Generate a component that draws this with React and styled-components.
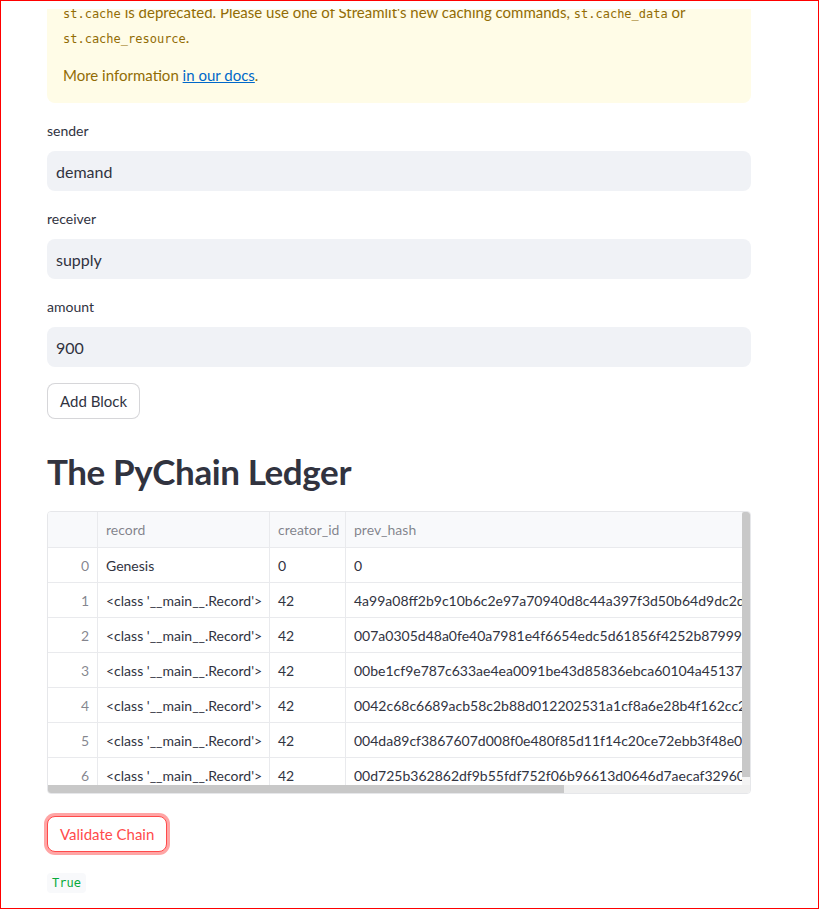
import React from "react";
import styled, { createGlobalStyle } from "styled-components";

const GlobalStyle = createGlobalStyle`
  html, body { margin: 0; padding: 0; background: #ffffff; }
  * { box-sizing: border-box; }
`;

const SANS = `"Lato", "Noto Sans", sans-serif`;
const MONO = `"DejaVu Sans Mono", "Liberation Mono", monospace`;

const Frame = styled.div`
  width: 819px;
  height: 909px;
  border: 1px solid #ff0000;
  overflow: hidden;
  background: #ffffff;
  font-family: ${SANS};
  color: #31333f;
`;

const TopBar = styled.div`
  height: 8px;
  background: #ffffff;
`;

const Main = styled.main`
  width: 704px;
  margin-left: 46px;
  display: flex;
  flex-direction: column;
  gap: 16px;
`;

const Alert = styled.div`
  background: #fffce7;
  color: #926c05;
  border-radius: 0 0 8px 8px;
  padding: 0 16px 15px;
  overflow: hidden;
  font-size: 15px;
  line-height: 25px;
`;

const AlertBody = styled.div`
  margin-top: -9px;
  display: flex;
  flex-direction: column;
  gap: 13px;
`;

const AlertPara = styled.p`
  margin: 0;
  white-space: nowrap;
  line-height: 25px;
`;

const InlineCode = styled.code`
  font-family: ${MONO};
  font-size: 12px;
  line-height: 1;
  color: inherit;
`;

const DocLink = styled.a`
  color: #0068c9;
  text-decoration: underline;
`;

const Field = styled.div`
  display: flex;
  flex-direction: column;
`;

const Label = styled.label`
  font-size: 14px;
  line-height: 24px;
  height: 24px;
  margin-bottom: 8px;
  color: #31333f;
`;

const Input = styled.div`
  height: 40px;
  background: #f0f2f6;
  border-radius: 8px;
  display: flex;
  align-items: center;
  padding: 0 9px;
  font-size: 16px;
  color: #31333f;
`;

const ButtonRow = styled.div`
  display: flex;
  margin-top: ${(p) => p.$offset || 0}px;
`;

const Button = styled.button`
  font-family: ${SANS};
  font-size: 15px;
  height: 36px;
  padding: 0 12px;
  border-radius: 8px;
  background: #ffffff;
  cursor: pointer;
  border: 1px solid ${(p) => (p.$focused ? "#ff4b4b" : "rgba(49, 51, 63, 0.2)")};
  color: ${(p) => (p.$focused ? "#ff4b4b" : "#31333f")};
  box-shadow: ${(p) => (p.$focused ? "0 0 0 3px rgba(255, 75, 75, 0.5)" : "none")};
`;

const Heading = styled.h1`
  margin: 0;
  padding: 15px 0 3px;
  font-family: ${SANS};
  font-weight: 700;
  font-size: 35px;
  line-height: 42px;
  letter-spacing: -0.4px;
  color: #31333f;
`;

const TableBox = styled.div`
  height: 283px;
  border: 1px solid #e6e7ea;
  border-radius: 4px;
  overflow: hidden;
  display: grid;
  grid-template-columns: 1fr 8px;
  grid-template-rows: 1fr 8px;
`;

const Viewport = styled.div`
  overflow: hidden;
`;

const Grid = styled.div`
  display: grid;
  grid-template-columns: 50px 172px 76px 520px;
  width: max-content;
`;

const Cell = styled.div`
  height: ${(p) => (p.$head ? "36px" : "35px")};
  display: flex;
  align-items: center;
  justify-content: ${(p) => (p.$index ? "flex-end" : "flex-start")};
  padding: 0 8px;
  font-size: 14px;
  white-space: nowrap;
  overflow: hidden;
  background: ${(p) => (p.$head ? "#f8f9fb" : "#ffffff")};
  color: ${(p) => (p.$head || p.$index ? "rgba(49, 51, 63, 0.6)" : "#31333f")};
  border-right: 1px solid #e9eaed;
  border-bottom: 1px solid #e9eaed;
`;

const VTrack = styled.div`
  background: #f4f4f4;
  display: flex;
  flex-direction: column;
`;

const VThumb = styled.div`
  height: 265px;
  background: #c8c8c8;
  border-radius: 2px 2px 0 0;
`;

const HTrack = styled.div`
  background: #efefef;
  display: flex;
`;

const HThumb = styled.div`
  background: #c8c8c8;
`;

const Corner = styled.div`
  background: #efefef;
`;

const ResultLine = styled.div`
  line-height: 25px;
  font-size: 16px;
`;

const TrueCode = styled.code`
  font-family: ${MONO};
  font-size: 12px;
  color: #09ab3b;
  background: #f8f9fb;
  border-radius: 4px;
  padding: 3px 5px;
`;

const rows = [
  ["0", "Genesis", "0", "0"],
  ["1", "<class '__main__.Record'>", "42", "4a99a08ff2b9c10b6c2e97a70940d8c44a397f3d50b64d9dc2d681a1e3c7f2a9"],
  ["2", "<class '__main__.Record'>", "42", "007a0305d48a0fe40a7981e4f6654edc5d61856f4252b8799974831b8e2c0d14"],
  ["3", "<class '__main__.Record'>", "42", "00be1cf9e787c633ae4ea0091be43d85836ebca60104a4513796fc0942d7b1e6"],
  ["4", "<class '__main__.Record'>", "42", "0042c68c6689acb58c2b88d012202531a1cf8a6e28b4f162cc2bb77ac5e19f03"],
  ["5", "<class '__main__.Record'>", "42", "004da89cf3867607d008f0e480f85d11f14c20ce72ebb3f48e0bf55e26a91c7d"],
  ["6", "<class '__main__.Record'>", "42", "00d725b362862df9b55fdf752f06b96613d0646d7aecaf3296084c0aa4f6b2e8"],
];

const fields = [
  ["sender", "demand"],
  ["receiver", "supply"],
  ["amount", "900"],
];

export default function App() {
  return (
    <>
      <GlobalStyle />
      <Frame>
        <TopBar />
        <Main>
          <Alert>
            <AlertBody>
              <AlertPara>
                <InlineCode>st.cache</InlineCode> is deprecated. Please use one of Streamlit's new caching commands,{" "}
                <InlineCode>st.cache_data</InlineCode> or
                <br />
                <InlineCode>st.cache_resource</InlineCode>.
              </AlertPara>
              <AlertPara>
                More information <DocLink href="#">in our docs</DocLink>.
              </AlertPara>
            </AlertBody>
          </Alert>

          {fields.map(([label, value]) => (
            <Field key={label}>
              <Label>{label}</Label>
              <Input>{value}</Input>
            </Field>
          ))}

          <ButtonRow>
            <Button>Add Block</Button>
          </ButtonRow>

          <Heading>The PyChain Ledger</Heading>

          <TableBox>
            <Viewport>
              <Grid>
                <Cell $head />
                <Cell $head>record</Cell>
                <Cell $head>creator_id</Cell>
                <Cell $head>prev_hash</Cell>
                {rows.map((r) => (
                  <React.Fragment key={r[0]}>
                    <Cell $index>{r[0]}</Cell>
                    <Cell>{r[1]}</Cell>
                    <Cell>{r[2]}</Cell>
                    <Cell>{r[3]}</Cell>
                  </React.Fragment>
                ))}
              </Grid>
            </Viewport>
            <VTrack>
              <VThumb />
            </VTrack>
            <HTrack>
              <HThumb style={{ width: "516px" }} />
            </HTrack>
            <Corner />
          </TableBox>

          <ButtonRow $offset={6}>
            <Button $focused>Validate Chain</Button>
          </ButtonRow>

          <ResultLine>
            <TrueCode>True</TrueCode>
          </ResultLine>
        </Main>
      </Frame>
    </>
  );
}
